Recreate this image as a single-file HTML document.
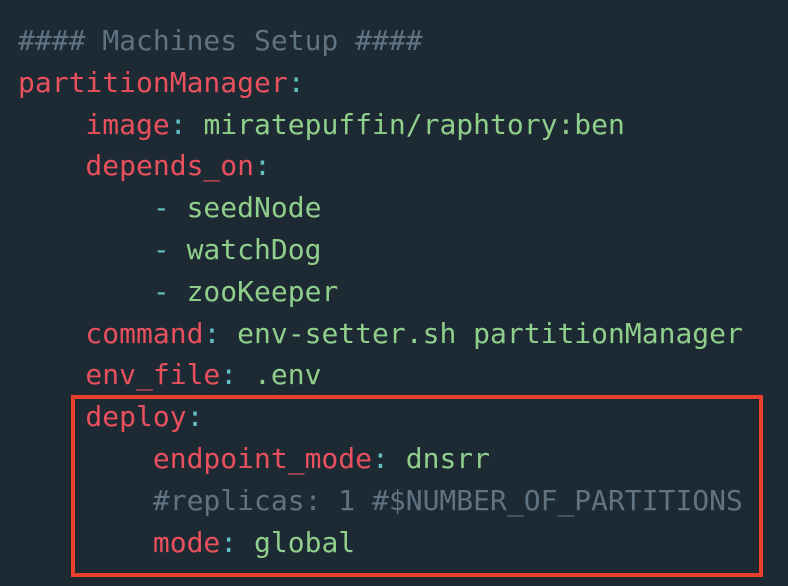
<!DOCTYPE html>
<html><head><style>
html,body{margin:0;padding:0;background:#1d2a33;width:788px;height:586px;overflow:hidden}
pre{margin:0;position:absolute;left:18px;top:20px;font-family:"DejaVu Sans Mono","Liberation Mono",monospace;font-size:28px;line-height:41.8px;color:#e8505e}
.c{color:#5f7383}.g{color:#8fcf8b}.p{color:#5fbfc1}
.box{position:absolute;left:71px;top:395px;width:684px;height:174px;border:4px solid #e8402a}
</style></head><body>
<div class="box"></div>
<pre><span class="c">#### Machines Setup ####</span>
partitionManager<span class="p">:</span>
    image<span class="p">:</span> <span class="g">miratepuffin/raphtory:ben</span>
    depends_on<span class="p">:</span>
        <span class="p">-</span> <span class="g">seedNode</span>
        <span class="p">-</span> <span class="g">watchDog</span>
        <span class="p">-</span> <span class="g">zooKeeper</span>
    command<span class="p">:</span> <span class="g">env-setter.sh partitionManager</span>
    env_file<span class="p">:</span> <span class="g">.env</span>
    deploy<span class="p">:</span>
        endpoint_mode<span class="p">:</span> <span class="g">dnsrr</span>
        <span class="c">#replicas: 1 #$NUMBER_OF_PARTITIONS</span>
        mode<span class="p">:</span> <span class="g">global</span></pre>
</body></html>
